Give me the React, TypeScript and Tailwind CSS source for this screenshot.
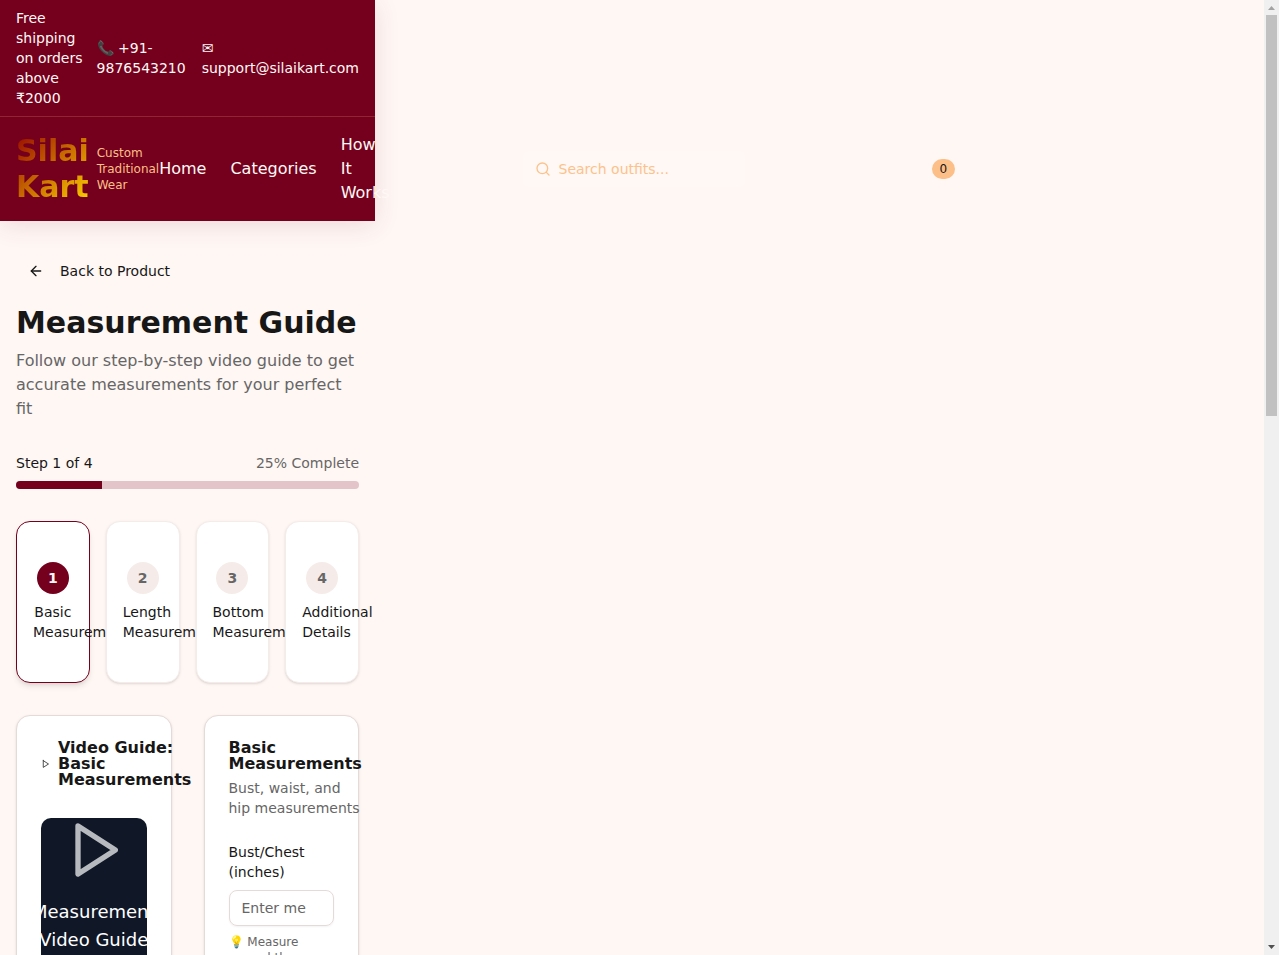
import { ArrowLeft, Search } from "lucide-react";

const steps = ["Basic Measurements", "Length Measurements", "Bottom Measurements", "Additional Details"];
const links = ["Home", "Categories", "How It Works"];

function PlayIcon({ className }: { className: string }) {
  return (
    <svg viewBox="0 0 24 24" fill="none" stroke="currentColor" strokeWidth="2" strokeLinecap="round" strokeLinejoin="round" className={className} aria-hidden="true">
      <polygon points="6 3 20 12 6 21 6 3" />
    </svg>
  );
}

function Header() {
  return (
    <header className="bg-[#75001d] text-[#fff8f5] shadow-[0_4px_24px_rgba(117,0,29,0.12)]">
      <div className="flex items-center justify-between border-b border-[#fcbf87]/20 px-4 py-2 text-sm">
        <p>Free shipping on orders above ₹2000</p>
        <div className="flex items-center gap-4">
          <span>📞 +91-9876543210</span>
          <span>✉ support@silaikart.com</span>
        </div>
      </div>
      <div className="flex items-center px-4 py-4">
        <a href="#home" className="flex shrink-0 items-center gap-2">
          <span className="w-min bg-[linear-gradient(135deg,#960800,#ffd700)] bg-clip-text text-3xl font-bold text-transparent">Silai Kart</span>
          <span className="w-min text-xs text-[#fcbf87]">Custom Traditional Wear</span>
        </a>
        <nav className="flex shrink-0 items-center gap-6">
          {links.map((l) => (
            <a key={l} href={"#" + l} className="w-min">{l}</a>
          ))}
        </nav>
        <label className="ml-[133px] flex h-9 w-[222px] shrink-0 items-center gap-2 rounded-md bg-white/10 px-3 text-[#fcc28c]">
          <Search className="size-4 shrink-0" />
          <input type="search" aria-label="Search outfits" placeholder="Search outfits..." className="w-full min-w-0 bg-transparent text-sm outline-none placeholder:text-[#fcc28c]" />
        </label>
        <span className="ml-[187px] shrink-0 rounded-full bg-[#fcbf87] px-2 py-0.5 text-xs text-[#171717]">0</span>
      </div>
    </header>
  );
}

function Steps() {
  return (
    <div className="mt-8 grid grid-cols-4 gap-4">
      {steps.map((s, i) => (
        <button
          key={s}
          type="button"
          className={
            "relative min-w-0 rounded-[14px] border bg-white px-4 py-10 text-center text-sm " +
            (i === 0 ? "border-[#75001d] shadow-md" : "border-[#f5ece9] shadow-sm")
          }
        >
          <span
            className={
              "mx-auto mb-2 flex size-8 items-center justify-center rounded-full font-bold " +
              (i === 0 ? "bg-[#75001d] text-[#fff7f4]" : "bg-[#f5ece9] text-[#666666]")
            }
          >
            {i + 1}
          </span>
          <span className="block">{s}</span>
        </button>
      ))}
    </div>
  );
}

function Scrollbar() {
  return (
    <div className="flex w-[15px] shrink-0 flex-col items-center bg-[#f0f0f0]" aria-hidden="true">
      <svg viewBox="0 0 15 15" className="size-[15px] shrink-0" fill="#a3a3a3"><path d="M4 10h7L7.500 6z" /></svg>
      <div className="h-[42%] w-[11px] bg-[#c1c1c1]" />
      <svg viewBox="0 0 15 15" className="mt-auto size-[15px] shrink-0" fill="#505050"><path d="M4 5h7L7.500 9z" /></svg>
    </div>
  );
}

export default function App() {
  return (
    <div className="flex h-screen overflow-hidden bg-[#fff7f4] font-['DejaVu_Sans',sans-serif] text-[#171717]">
      <div className="min-w-0 grow overflow-hidden">
        <div className="w-full max-w-[375px]">
          <Header />
          <main className="px-4 py-8">
            <button type="button" className="flex h-9 items-center gap-4 px-3 text-sm">
              <ArrowLeft className="size-4" />
              Back to Product
            </button>
            <h1 className="mt-4 text-3xl font-bold">Measurement Guide</h1>
            <p className="mt-2 text-[#666666]">Follow our step-by-step video guide to get accurate measurements for your perfect fit</p>
            <div className="mt-8 flex items-center justify-between text-sm">
              <span>Step 1 of 4</span>
              <span className="text-[#666666]">25% Complete</span>
            </div>
            <div role="progressbar" aria-label="Progress" aria-valuenow={25} className="mt-2 h-2 overflow-hidden rounded-full bg-[#e3c4c9]">
              <div className="h-full w-1/4 bg-[#75001d]" />
            </div>
            <Steps />
            <div className="mt-8 grid grid-cols-2 gap-8">
              <section className="min-w-0 rounded-[14px] border border-[#e5dad7] bg-white p-6 shadow-sm">
                <h2 className="flex items-center gap-2 leading-4 font-bold">
                  <PlayIcon className="h-5 w-[9px] shrink-0" />
                  <span>Video Guide: Basic Measurements</span>
                </h2>
                <div className="mt-[30px] flex flex-col items-center overflow-hidden rounded-[10px] bg-gray-900 pb-4 text-center text-white">
                  <PlayIcon className="mb-4 size-16 shrink-0 opacity-70" />
                  <p className="w-min text-lg">Measurement Video&nbsp;Guide</p>
                  <p className="w-min text-sm opacity-70">Basic Measurements</p>
                </div>
              </section>
              <section className="min-w-0 rounded-[14px] border border-[#e5dad7] bg-white p-6 shadow-sm">
                <div className="grid w-min gap-1.5">
                  <h2 className="leading-4 font-bold">Basic Measurements</h2>
                  <p className="text-sm text-[#666666]">Bust, waist, and hip measurements</p>
                </div>
                <label htmlFor="bust" className="mt-6 block text-sm">Bust/Chest (inches)</label>
                <input id="bust" type="number" placeholder="Enter measurement" className="mt-2 block h-9 w-full rounded-lg border border-[#e5dad7] px-3 text-sm shadow-xs placeholder:text-[#666666]" />
                <p className="mt-2 text-xs text-[#666666]">💡 Measure around the fullest part of your bust</p>
              </section>
            </div>
          </main>
        </div>
      </div>
      <Scrollbar />
    </div>
  );
}
